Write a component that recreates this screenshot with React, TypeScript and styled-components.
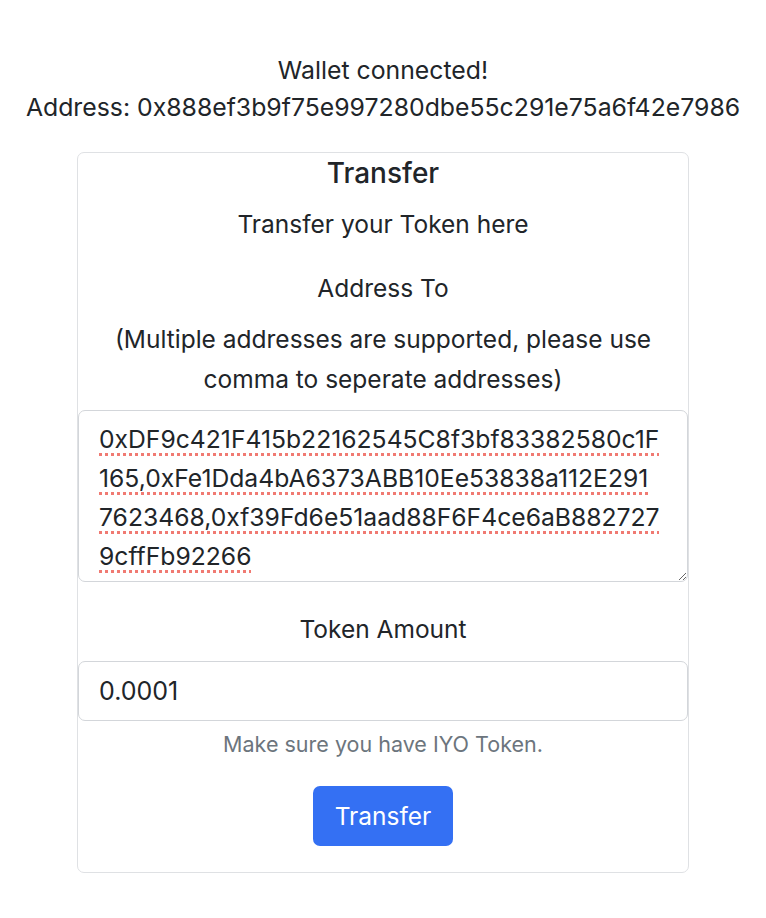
import React from "react";
import styled, { createGlobalStyle } from "styled-components";

const GlobalStyle = createGlobalStyle`
  html, body { margin: 0; padding: 0; background: #ffffff; }
  body {
    font-family: Inter, "Noto Sans", "Liberation Sans", sans-serif;
    color: #212529;
    -webkit-font-smoothing: antialiased;
  }
  * { box-sizing: border-box; }
`;

const Page = styled.div`
  width: 766px;
  padding-top: 52px;
  display: flex;
  flex-direction: column;
  align-items: center;
`;

const Status = styled.div`
  text-align: center;
  font-size: 24.8px;
  line-height: 37px;
  margin-bottom: 26px;
`;

const Card = styled.div`
  width: 612px;
  border: 1px solid #dfe1e4;
  border-radius: 7px;
  display: flex;
  flex-direction: column;
  align-items: center;
  text-align: center;
  padding-bottom: 26px;
`;

const Title = styled.h3`
  margin: 0;
  font-size: 28px;
  font-weight: 500;
  line-height: 41px;
`;

const Text = styled.p<{ $mt: number }>`
  margin: ${(p) => p.$mt}px 0 0;
  font-size: 24.5px;
  line-height: 40px;
`;

const AddressArea = styled.textarea`
  margin-top: 11px;
  width: 100%;
  height: 172px;
  border: 1px solid #d3d6da;
  border-radius: 7px;
  padding: 9px 8px 0 20px;
  font-family: inherit;
  font-size: 24.7px;
  line-height: 39px;
  color: #212529;
  resize: vertical;
  overflow: hidden;
  outline: none;
  text-decoration: underline dotted #f07a72;
  text-decoration-thickness: 3px;
  text-underline-offset: 5px;
`;

const AmountInput = styled.input`
  margin-top: 12px;
  width: 100%;
  height: 60px;
  border: 1px solid #d3d6da;
  border-radius: 7px;
  padding: 0 20px;
  font-family: inherit;
  font-size: 25px;
  color: #212529;
  outline: none;
`;

const Help = styled.div`
  margin-top: 11px;
  font-size: 21.5px;
  line-height: 24px;
  color: #6c757d;
`;

const Button = styled.button`
  margin-top: 30px;
  height: 60px;
  padding: 0 22px;
  border: none;
  border-radius: 7px;
  background: #3470f3;
  color: #ffffff;
  font-family: inherit;
  font-size: 24.5px;
  cursor: pointer;
`;

const addressLines = [
  "0xDF9c421F415b22162545C8f3bf83382580c1F",
  "165,0xFe1Dda4bA6373ABB10Ee53838a112E291",
  "7623468,0xf39Fd6e51aad88F6F4ce6aB882727",
  "9cffFb92266",
];

export default function App() {
  return (
    <>
      <GlobalStyle />
      <Page>
        <Status>
          Wallet connected!
          <br />
          Address: 0x888ef3b9f75e997280dbe55c291e75a6f42e7986
        </Status>
        <Card>
          <Title>Transfer</Title>
          <Text $mt={10}>Transfer your Token here</Text>
          <Text $mt={24}>Address To</Text>
          <Text $mt={11}>
            (Multiple addresses are supported, please use
            <br />
            comma to seperate addresses)
          </Text>
          <AddressArea spellCheck={false} defaultValue={addressLines.join("\n")} />
          <Text $mt={27}>Token Amount</Text>
          <AmountInput defaultValue="0.0001" />
          <Help>Make sure you have IYO Token.</Help>
          <Button>Transfer</Button>
        </Card>
      </Page>
    </>
  );
}
